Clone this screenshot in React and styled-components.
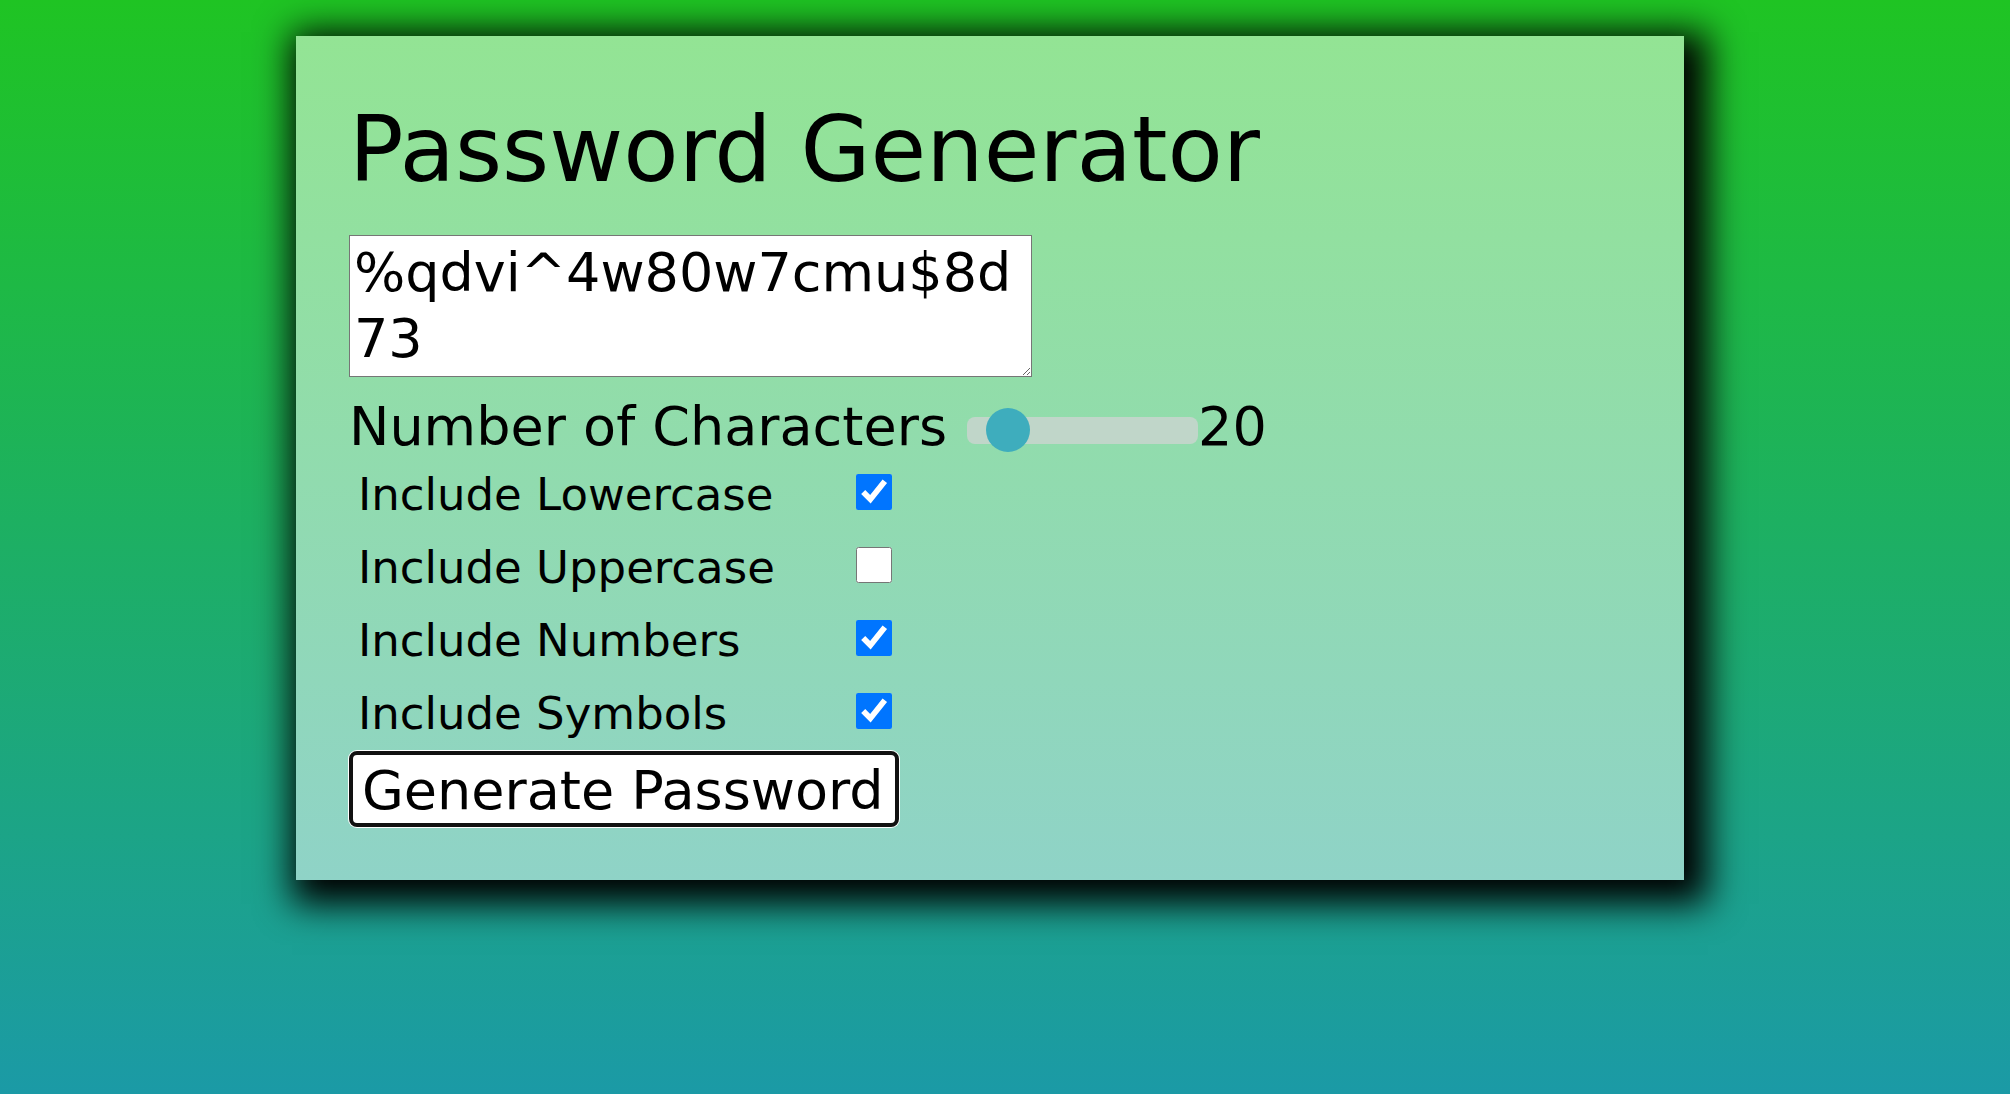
import React, { useState } from 'react';
import styled, { createGlobalStyle } from 'styled-components';

const GlobalStyle = createGlobalStyle`
  html, body {
    margin: 0;
    padding: 0;
  }
  body {
    font-family: "DejaVu Sans", Verdana, sans-serif;
    color: #000;
  }
`;

const Page = styled.div`
  box-sizing: border-box;
  min-height: 100vh;
  display: flex;
  justify-content: center;
  align-items: flex-start;
  padding: 36px 30px 0 0;
  background: linear-gradient(180deg, #1fc423 0%, #1b9aa6 100%);
`;

const Card = styled.div`
  box-sizing: border-box;
  width: 1388px;
  padding: 0 53px 53px;
  background: linear-gradient(180deg, #93e494 0%, #8fd3c7 100%);
  box-shadow: 10px 10px 34px 14px #000;
`;

const Title = styled.h1`
  margin: 61px 0 33px;
  font-size: 90.5px;
  font-weight: normal;
  line-height: normal;
`;

const Output = styled.textarea`
  display: block;
  box-sizing: border-box;
  width: 683px;
  height: 142px;
  margin: 0;
  padding: 4px 4px 2px;
  border: 1px solid #767676;
  background: #fff;
  font-family: inherit;
  font-size: 54px;
  line-height: 66px;
  color: #000;
  outline: none;
`;

const LengthRow = styled.div`
  display: flex;
  align-items: center;
  margin-top: 18px;
  font-size: 54px;
`;

const Slider = styled.input`
  -webkit-appearance: none;
  appearance: none;
  width: 231px;
  height: 27px;
  margin: 7px 0 0 20px;
  border-radius: 8px;
  background: #c0d6c9;
  outline: none;

  &::-webkit-slider-thumb {
    -webkit-appearance: none;
    appearance: none;
    width: 44px;
    height: 44px;
    border-radius: 50%;
    background: #3eadbd;
    cursor: pointer;
  }
`;

const Options = styled.div`
  display: flex;
  flex-direction: column;
  gap: 22px;
  padding: 11px 0 0 9px;
`;

const Option = styled.label`
  display: flex;
  align-items: center;
  font-size: 45px;
  line-height: 51px;
`;

const OptionText = styled.span`
  flex: 0 0 498px;
`;

const Check = styled.input`
  width: 36px;
  height: 36px;
  margin: 0 0 5px;
`;

const GenerateButton = styled.button`
  margin-top: 12px;
  padding: 6px 11px 2px 9px;
  border: 4px solid #111;
  border-radius: 8px;
  background: #fff;
  box-shadow: 0 0 0 1px #fff;
  font-family: inherit;
  font-size: 54px;
  line-height: 60px;
  color: #000;
  cursor: pointer;
`;

const options = [
  { key: 'lower', label: 'Include Lowercase' },
  { key: 'upper', label: 'Include Uppercase' },
  { key: 'numbers', label: 'Include Numbers' },
  { key: 'symbols', label: 'Include Symbols' },
];

export default function App() {
  const [length, setLength] = useState(20);
  const [flags, setFlags] = useState({ lower: true, upper: false, numbers: true, symbols: true });
  const [password] = useState('%qdvi^4w80w7cmu$8d73');

  return (
    <>
      <GlobalStyle />
      <Page>
        <Card>
          <Title>Password Generator</Title>
          <Output value={password} readOnly />
          <LengthRow>
            <span>Number of Characters</span>
            <Slider
              type="range"
              min="8"
              max="128"
              value={length}
              onChange={(e) => setLength(Number(e.target.value))}
            />
            <span>{length}</span>
          </LengthRow>
          <Options>
            {options.map((o) => (
              <Option key={o.key}>
                <OptionText>{o.label}</OptionText>
                <Check
                  type="checkbox"
                  checked={flags[o.key]}
                  onChange={() => setFlags({ ...flags, [o.key]: !flags[o.key] })}
                />
              </Option>
            ))}
          </Options>
          <GenerateButton>Generate Password</GenerateButton>
        </Card>
      </Page>
    </>
  );
}
